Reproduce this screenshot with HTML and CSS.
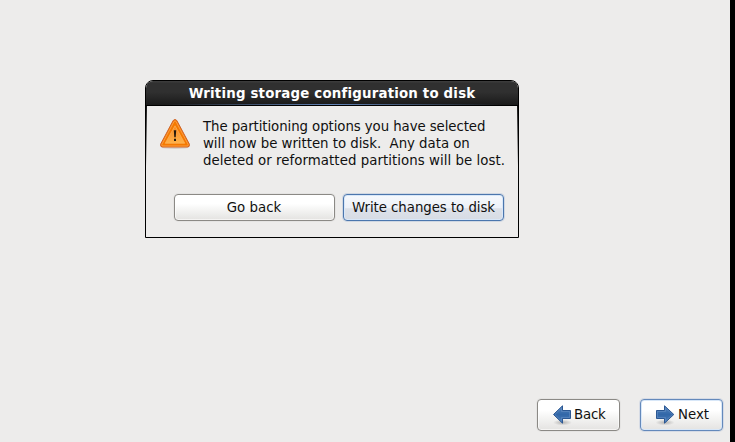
FILE: index.html
```html
<!DOCTYPE html>
<html lang="en">
<head>
<meta charset="utf-8">
<title>Installer</title>
<link rel="stylesheet" href="styles.css">
</head>
<body>
<main class="screen">
  <section class="dialog" role="dialog" aria-labelledby="title">
    <h1 class="titlebar" id="title">Writing storage configuration to disk</h1>
    <div class="content">
      <div class="message">
        <svg class="warning" width="32" height="32" viewBox="0 0 32 32" aria-hidden="true">
          <defs>
            <linearGradient id="amber" x1="0" y1="0" x2="0" y2="1"><stop offset="0" stop-color="#f58a24"/><stop offset="1" stop-color="#ffb24a"/></linearGradient>
          </defs>
          <ellipse cx="16" cy="29.5" rx="14" ry="1.5" fill="#d5d2ce"/>
          <path d="M14.2 2.5Q16 .4 17.8 2.5L30.3 26Q31 29 28.5 29H3.5Q1 29 1.7 26Z" fill="#f57900" stroke="#cf6328"/>
          <path d="M15.1 3.4Q16 2.2 16.9 3.4L29.2 26.5Q29.6 28 28 28H4Q2.400 28 2.800 26.500Z" fill="none" stroke="#fba04a" stroke-width=".9"/>
          <path d="M16 7.800L25.800 25.300H6.200Z" fill="url(#amber)" stroke="#fcb15c" stroke-width=".7"/>
          <path d="M14.800 12.300h2.400l-.5 6.900h-1.400zM15 20.700h2v2.200h-2z" fill="#24190c"/>
        </svg>
        <p class="text"><span class="line line-tight">The partitioning options you have selected</span><span class="line line-snug">will now be written to disk.&nbsp; Any data on</span><span class="line line-loose">deleted or reformatted partitions will be lost.</span></p>
      </div>
      <div class="actions">
        <button class="button">Go back</button>
        <button class="button primary">Write changes to disk</button>
      </div>
    </div>
  </section>
  <nav class="navigation">
    <button class="button nav-button">
      <svg class="arrow" width="22" height="24" viewBox="0 0 22 24" aria-hidden="true">
        <defs>
          <linearGradient id="blue" x1="0" y1="0" x2="0" y2="1"><stop offset="0" stop-color="#5585bd"/><stop offset=".5" stop-color="#3267a8"/><stop offset="1" stop-color="#4c7fb9"/></linearGradient>
          <radialGradient id="shade"><stop offset="0" stop-color="#000" stop-opacity=".25"/><stop offset="1" stop-color="#000" stop-opacity="0"/></radialGradient>
        </defs>
        <ellipse cx="10.500" cy="20.500" rx="9.500" ry="3" fill="url(#shade)"/>
        <path d="M1.500 12.500L10.500 3.800V8.500H18.500V16.500H10.500V21.200Z" fill="url(#blue)" stroke="#2b5792"/>
        <path d="M2.900 12.500L9.500 6V9.500H17.500V15.500H9.500V19Z" fill="none" stroke="#799fcd" stroke-width=".7" opacity=".55"/>
      </svg>
      <span class="nav-label">Back</span>
    </button>
    <button class="button nav-button next">
      <svg class="arrow" width="22" height="24" viewBox="0 0 22 24" aria-hidden="true">
        <ellipse cx="10" cy="20.500" rx="9.500" ry="3" fill="url(#shade)"/>
        <path d="M18.800 12.500L9.500 3.800V8.500H1.500V16.500H9.500V21.200Z" fill="url(#blue)" stroke="#2b5792"/>
        <path d="M17.400 12.500L10.500 6V9.500H2.500V15.500H10.500V19Z" fill="none" stroke="#799fcd" stroke-width=".7" opacity=".55"/>
      </svg>
      <span class="next-label">Next</span>
    </button>
  </nav>
</main>
</body>
</html>
```
FILE: styles.css
```css
* { box-sizing: border-box; }

body {
  margin: 0;
  background: #edeceb;
  color: #101010;
  font: 13.33px/17px "DejaVu Sans", sans-serif;
}

.screen {
  display: flex;
  flex-direction: column;
  justify-content: space-between;
  width: 735px;
  height: 442px;
  padding: 80px 7px 11px 145px;
  border-right: 5px solid #000;
  overflow: hidden;
}

.dialog {
  width: 374px;
  height: 158px;
  border: 1px solid #000;
  border-radius: 8px 8px 0 0;
}

.titlebar {
  height: 25px;
  margin: 0;
  border-bottom: 1px solid #000;
  border-radius: 7px 7px 0 0;
  background:
    linear-gradient(90deg, transparent 5%, #6284b8 50%, transparent 95%) bottom / 100% 1px no-repeat,
    linear-gradient(#3b3b3b 0 1px, #303030 2px 11px, #1a1a1a 24px);
  color: #fff;
  font-size: 13.33px;
  font-weight: bold;
  letter-spacing: .2px;
  line-height: 25px;
  text-align: center;
}

.content {
  height: 131px;
  padding: 12px 14px 0 13px;
  background:
    linear-gradient(#111, transparent) left top / 1px 60px no-repeat,
    linear-gradient(#111, transparent) right top / 1px 60px no-repeat;
}

.message {
  display: flex;
  gap: 12px;
}

.warning { flex: none; }

.text {
  margin: 0;
  white-space: nowrap;
}

.line { display: block; }
.line-tight { letter-spacing: -.08px; }
.line-snug { letter-spacing: -.03px; }
.line-loose { letter-spacing: .05px; }

.actions {
  display: flex;
  justify-content: flex-end;
  gap: 8px;
  margin-top: 25px;
}

.button {
  width: 161px;
  height: 27px;
  padding: 0 1px 0 0;
  border: 1px solid #8b8985;
  border-radius: 4px;
  background: linear-gradient(#fff 0 35%, #f6f6f5 55%, #e4e3e1);
  box-shadow: inset 0 0 0 1px #ffffff99, 0 0 0 1px #00000008;
  color: inherit;
  font: inherit;
  white-space: nowrap;
}

.primary {
  padding: 0;
  letter-spacing: -.05px;
  border-color: #4b76ad;
  background: linear-gradient(#f6f9fd, #edf1f8 50%, #dce1e9 55%, #d7dce4);
  box-shadow: inset 0 0 0 1px #d8e7f8, 0 0 0 1px #7b9dcb44;
}

.navigation {
  display: flex;
  justify-content: flex-end;
  gap: 20px;
}

.nav-button {
  display: flex;
  align-items: center;
  width: 83px;
  height: 32px;
  padding: 0 0 2px 14px;
}

.next {
  border-color: #6489bb;
  box-shadow: inset 0 0 0 1px #d8e7f8, 0 0 0 1px #7b9dcb33;
}

.arrow { flex: none; }
.nav-label { letter-spacing: -.2px; }
.next-label { margin-left: 1px; }
```
